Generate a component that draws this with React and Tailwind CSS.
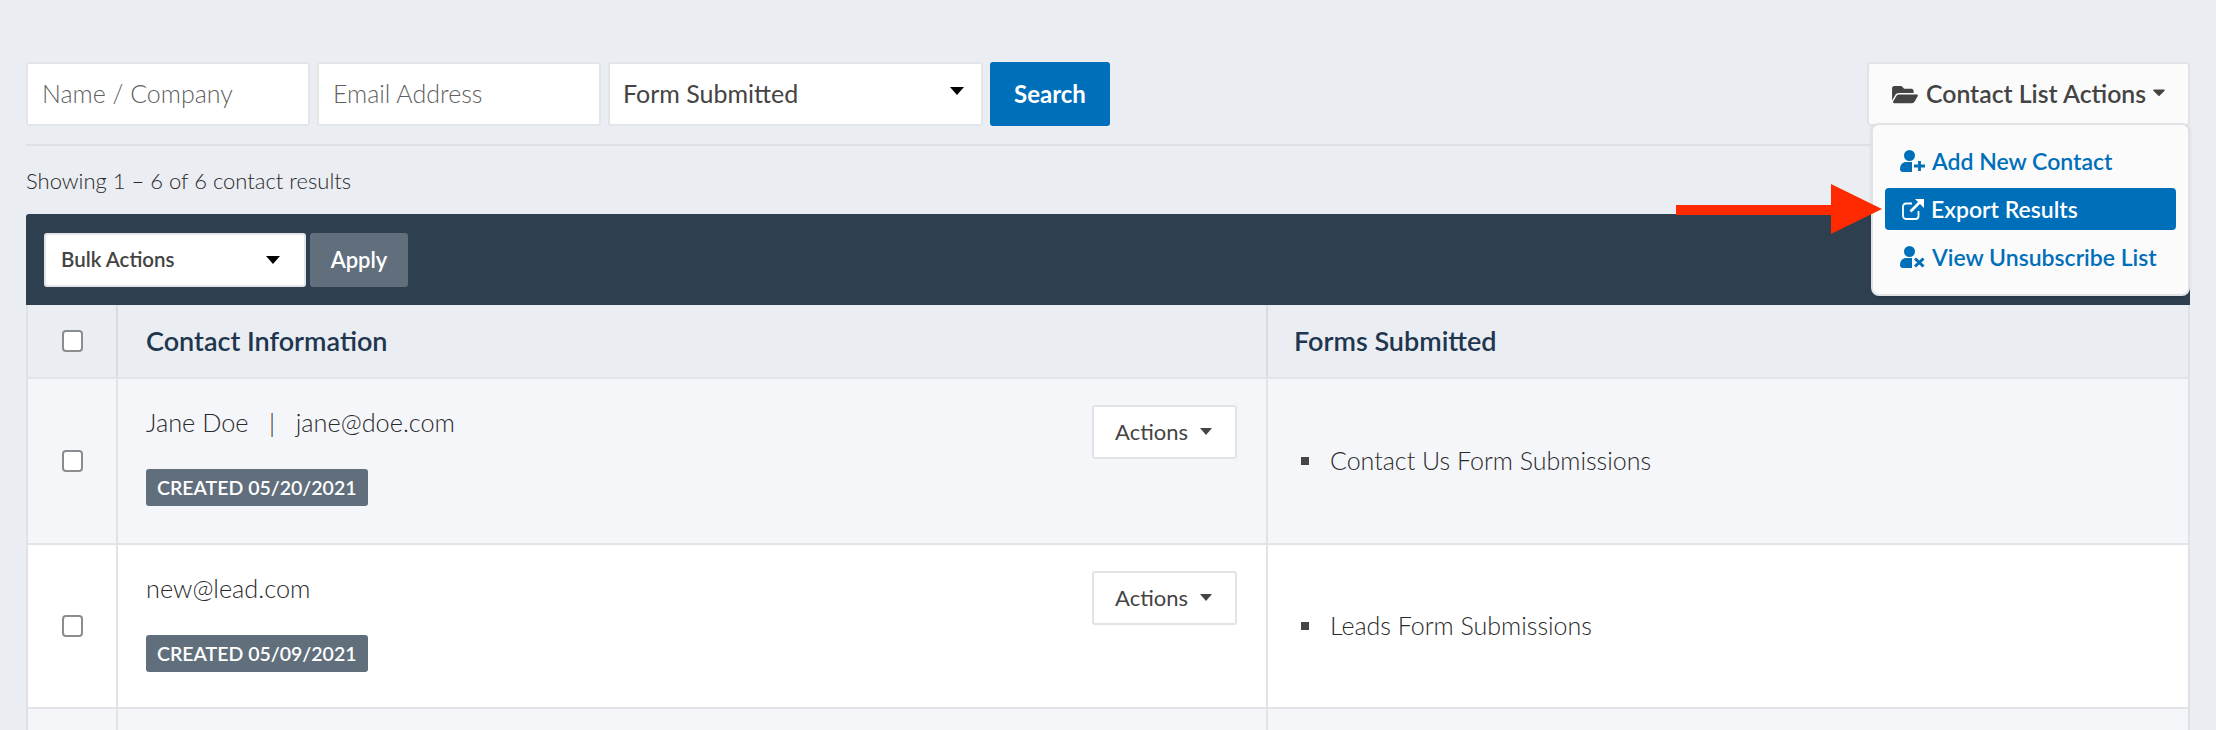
import React from 'react';
import { FaFolderOpen, FaCaretDown } from 'react-icons/fa';

const forms = ['Contact Us Form Submissions', 'Leads Form Submissions'];

const contacts = [
  { id: 1, label: 'Jane Doe   |   jane@doe.com', created: '05/20/2021', form: forms[0], height: 'h-[166px]', bg: 'bg-[#f5f6fa]' },
  { id: 2, label: 'new@lead.com', created: '05/09/2021', form: forms[1], height: 'h-[164px]', bg: 'bg-white' },
];

function Caret() {
  return <span className="w-0 h-0 border-x-[7px] border-x-transparent border-t-[8px] border-t-black"></span>;
}

function Checkbox() {
  return <input type="checkbox" className="appearance-none block w-[21px] h-[22px] rounded-[4px] border-2 border-[#8a8d90] bg-white" />;
}

function ExportIcon() {
  return (
    <svg viewBox="0 0 24 24" className="w-[24px] h-[24px] shrink-0" fill="none" stroke="currentColor" strokeWidth="1.8">
      <path d="M17.5 14v5a3 3 0 0 1-3 3H5a3 3 0 0 1-3-3V9.500a3 3 0 0 1 3-3h6" />
      <path d="M9.500 14.500 21 3" strokeWidth="2.6" />
      <path d="M14 2h9v9z" fill="currentColor" stroke="none" />
    </svg>
  );
}

// person with a mark at the lower right, plus or cross
function UserIcon({ mark }) {
  return (
    <svg viewBox="0 0 26 22" className="w-[26px] h-[22px] shrink-0" fill="currentColor">
      <circle cx="9.500" cy="5.500" r="5.500" />
      <path d="M0 19c0-4.500 3-7 6-7h7c3 0 5 1.500 5.500 4v6H3a3 3 0 0 1-3-3z" />
      <path d="M12 12h14v10H12z" fill="#fbfbfc" />
      {mark === 'plus' ? (
        <path d="M19.500 11v10M14 16h11" stroke="currentColor" strokeWidth="2.800" fill="none" />
      ) : (
        <path d="M15 12.500l8.500 8M23.500 12.500l-8.500 8" stroke="currentColor" strokeWidth="3" fill="none" />
      )}
    </svg>
  );
}

function SearchBar() {
  return (
    <div className="flex items-center gap-[7px]">
      <input
        placeholder="Name / Company"
        className="w-[284px] h-[64px] pl-[14px] pb-[2px] bg-white border-2 border-[#e4e5e8] rounded-[3px] text-[25px] font-light placeholder:text-[#5f5f5f] outline-none"
      />
      <input
        placeholder="Email Address"
        className="w-[284px] h-[64px] pl-[14px] pb-[2px] bg-white border-2 border-[#e4e5e8] rounded-[3px] text-[25px] font-light placeholder:text-[#5f5f5f] outline-none"
      />
      <div className="relative w-[375px] h-[64px]">
        <select className="appearance-none w-full h-full pl-[13px] bg-white border-2 border-[#e4e5e8] rounded-[3px] text-[25px] text-[#444] outline-none">
          <option>Form Submitted</option>
        </select>
        <span className="absolute right-[19px] top-[25px] flex"><Caret /></span>
      </div>
      <button className="w-[120px] h-[64px] bg-[#006fba] text-white text-[24px] font-bold rounded-[3px]">Search</button>
    </div>
  );
}

function ListActions() {
  return (
    <div className="relative">
      <button className="flex items-center w-[323px] h-[64px] pl-[23px] bg-[#fbfbfc] border-2 border-[#e2e3e6] rounded-[4px] text-[24.800px] font-semibold text-[#444]">
        <FaFolderOpen className="w-[26px] h-[23px] mr-[8px]" />
        <span>Contact List Actions</span>
        <FaCaretDown className="w-[20px] h-[20px] ml-[3px] -mt-[4px]" />
      </button>

      <div className="absolute right-0 top-[61px] z-10 w-[319px] h-[173px] pt-[15px] px-[12px] bg-[#fbfbfc] border-2 border-[#e2e3e6] rounded-[8px] shadow-sm text-[#006fba] text-[23px] font-semibold">
        <a className="flex items-center h-[42px] pl-[15px] gap-[6px]">
          <UserIcon mark="plus" />
          Add New Contact
        </a>
        <a className="flex items-center h-[42px] mt-[6px] pl-[16px] gap-[6px] bg-[#006fba] text-white rounded-[4px]">
          <ExportIcon />
          Export Results
        </a>
        <a className="flex items-center h-[42px] mt-[6px] pl-[15px] gap-[6px]">
          <UserIcon mark="cross" />
          View Unsubscribe List
        </a>
      </div>

      <svg viewBox="0 0 206 50" className="absolute top-[122px] right-[308px] z-20 w-[206px] h-[50px]">
        <path d="M0 21h155V0l51 25-51 25V31H0z" fill="#ff2a00" />
      </svg>
    </div>
  );
}

function ContactRow({ contact }) {
  return (
    <div className={`flex ${contact.height} ${contact.bg} border-b-2 border-[#e2e3e6]`}>
      <div className="flex items-center justify-center w-[90px] border-r-2 border-[#e2e3e6] shrink-0">
        <Checkbox />
      </div>
      <div className="flex justify-between w-[1150px] pl-[28px] pr-[29px] pt-[26px] border-r-2 border-[#e2e3e6] shrink-0">
        <div>
          <div className="h-[34px] leading-[34px] text-[25.300px] font-light text-[#2a2a2a] whitespace-pre">{contact.label}</div>
          <span className="inline-flex items-center mt-[30px] h-[37px] px-[11px] bg-[#616f7d] text-white text-[19.500px] font-semibold rounded-[3px]">
            CREATED {contact.created}
          </span>
        </div>
        <button className="flex items-center justify-center gap-[12px] w-[145px] h-[54px] pb-[2px] pr-[2px] bg-white border-2 border-[#e2e3e6] rounded-[3px] text-[22px] text-[#444]">
          Actions
          <span className="w-0 h-0 border-x-[6px] border-x-transparent border-t-[7px] border-t-[#444]"></span>
        </button>
      </div>
      <div className="flex items-center flex-1 pl-[33px] gap-[21px] text-[25px] font-light text-[#2a2a2a]">
        <span className="w-[8px] h-[8px] bg-[#444]"></span>
        {contact.form}
      </div>
    </div>
  );
}

export default function App() {
  return (
    <div className="h-[730px] overflow-hidden bg-[#eaedf2] pt-[62px] px-[26px] text-[#444] font-['Lato','Noto_Sans',sans-serif]">
      <div className="flex justify-between items-start">
        <SearchBar />
        <ListActions />
      </div>

      <div className="mt-[18px] h-[2px] bg-[#dfe0e4]"></div>

      <div className="mt-[18px] h-[34px] leading-[34px] text-[22px] font-light text-[#2a2a2a]">Showing 1 – 6 of 6 contact results</div>

      <div className="flex items-center gap-[4px] mt-[16px] h-[91px] pl-[18px] bg-[#2e3f50] rounded-t-[3px]">
        <div className="relative w-[262px] h-[54px]">
          <select className="appearance-none w-full h-full pl-[15px] bg-white border-2 border-[#e4e5e8] rounded-[3px] text-[20.500px] font-semibold text-[#444] outline-none">
            <option>Bulk Actions</option>
          </select>
          <span className="absolute right-[26px] top-[23px] flex"><Caret /></span>
        </div>
        <button className="w-[98px] h-[54px] bg-[#616f7d] text-white text-[22px] font-semibold rounded-[3px]">Apply</button>
      </div>

      <div className="border-x-2 border-[#dfe1e5]">
        <div className="flex h-[74px] bg-[#eaedf2] border-b-2 border-[#e2e3e6] text-[27px] font-semibold text-[#1f364f]">
          <div className="flex items-center justify-center w-[90px] border-r-2 border-[#d9dbdf] shrink-0">
            <Checkbox />
          </div>
          <div className="flex items-center w-[1150px] pl-[28px] border-r-2 border-[#d9dbdf] shrink-0">Contact Information</div>
          <div className="flex items-center flex-1 pl-[26px]">Forms Submitted</div>
        </div>

        {contacts.map((contact) => (
          <ContactRow key={contact.id} contact={contact} />
        ))}

        <div className="flex h-[40px] bg-[#f5f6fa]">
          <div className="w-[90px] border-r-2 border-[#e2e3e6] shrink-0"></div>
          <div className="w-[1150px] border-r-2 border-[#e2e3e6] shrink-0"></div>
        </div>
      </div>
    </div>
  );
}
